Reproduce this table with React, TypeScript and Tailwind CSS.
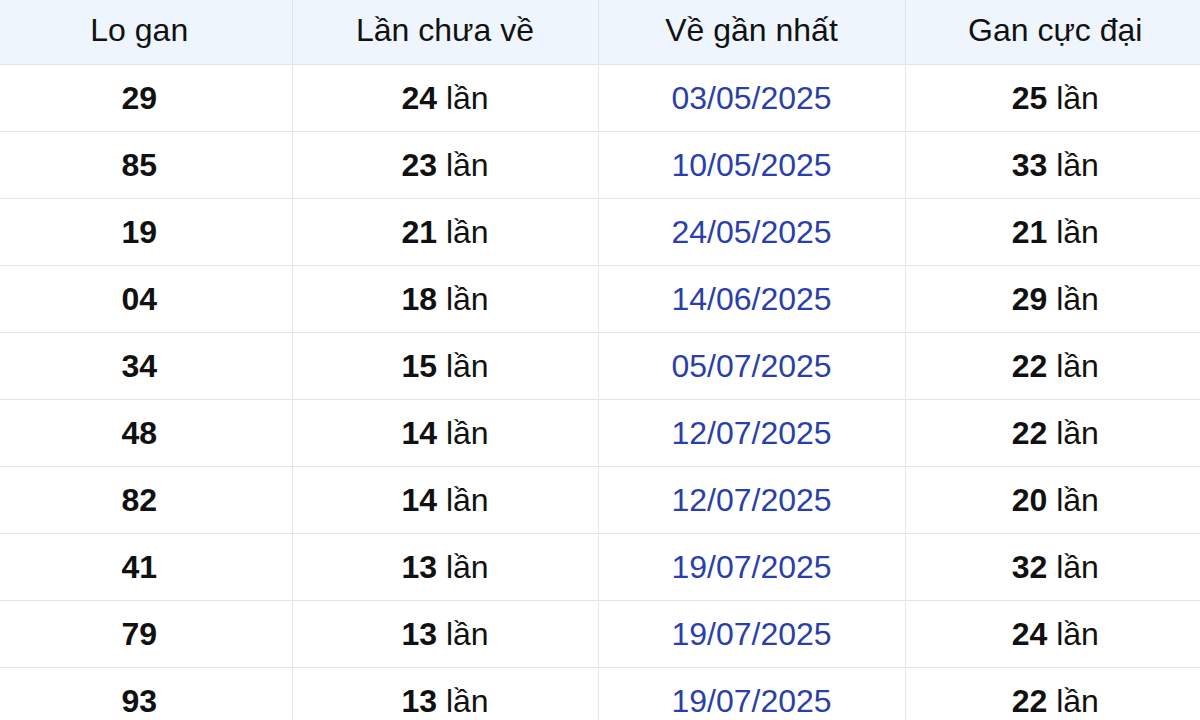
const ROWS: [string, number, string, number][] = [
  ["29", 24, "03/05/2025", 25],
  ["85", 23, "10/05/2025", 33],
  ["19", 21, "24/05/2025", 21],
  ["04", 18, "14/06/2025", 29],
  ["34", 15, "05/07/2025", 22],
  ["48", 14, "12/07/2025", 22],
  ["82", 14, "12/07/2025", 20],
  ["41", 13, "19/07/2025", 32],
  ["79", 13, "19/07/2025", 24],
  ["93", 13, "19/07/2025", 22],
];

const HEADERS = ["Lo gan", "Lần chưa về", "Về gần nhất", "Gan cực đại"];

export default function App() {
  return (
    <div className="h-[720px] w-[1200px] overflow-hidden bg-white font-['Liberation_Sans',Arial,sans-serif] text-[32px] text-[#111]">
      {/* table is wider than the crop: first and last columns are cut */}
      <table className="ml-[-13px] w-[1218px] table-fixed border-collapse">
        <colgroup>
          <col className="w-[305px]" />
          <col className="w-[306px]" />
          <col className="w-[307px]" />
          <col />
        </colgroup>
        <thead>
          <tr className="h-[64px] bg-[#eef5fd]">
            {HEADERS.map((h, i) => (
              <th
                key={h}
                className={`border-b border-[#dfe3e8] pb-1 text-center font-normal ${
                  i > 0 ? "border-l" : ""
                }`}
              >
                {h}
              </th>
            ))}
          </tr>
        </thead>
        <tbody>
          {ROWS.map(([num, miss, date, max]) => (
            <tr key={num} className="h-[67px]">
              <td className="border-b border-[#e2e4e7] text-center font-bold">
                {num}
              </td>
              <td className="border-b border-l border-[#e2e4e7] text-center">
                <b>{miss}</b> lần
              </td>
              <td className="border-b border-l border-[#e2e4e7] text-center text-[#2a3fab]">
                {date}
              </td>
              <td className="border-b border-l border-[#e2e4e7] text-center">
                <b>{max}</b> lần
              </td>
            </tr>
          ))}
        </tbody>
      </table>
    </div>
  );
}
